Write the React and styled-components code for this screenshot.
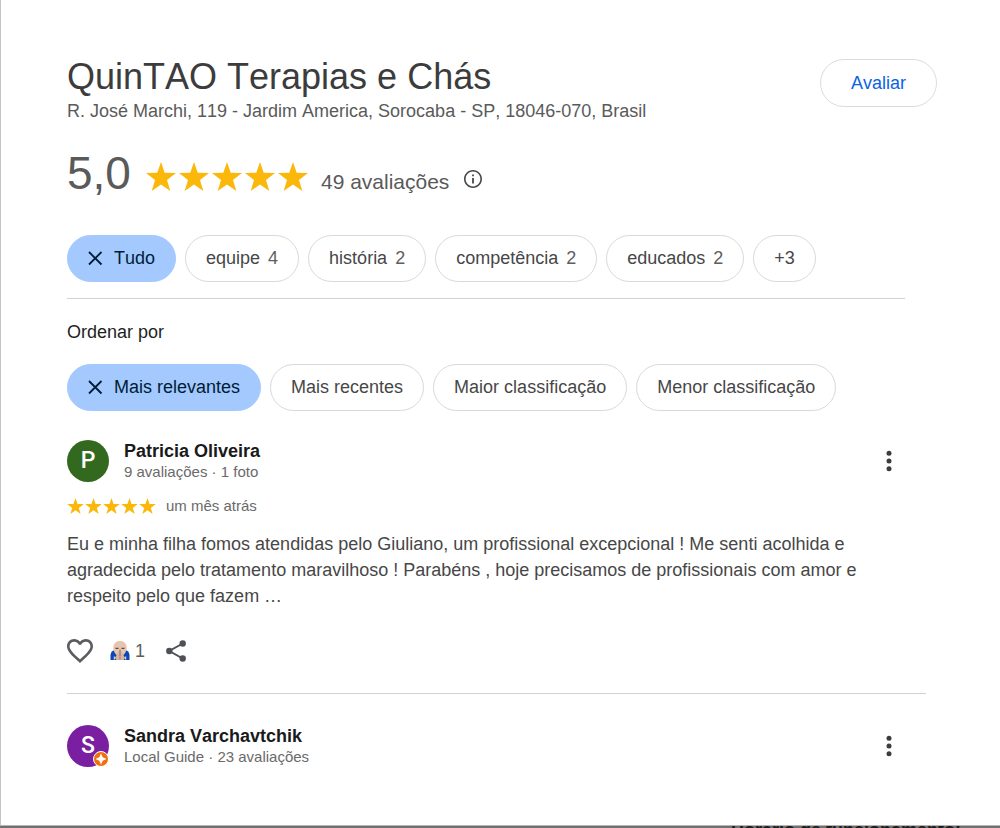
import React from "react";
import styled, { createGlobalStyle } from "styled-components";

const GlobalStyle = createGlobalStyle`
  * { box-sizing: border-box; }
  body {
    margin: 0;
    background: #fff;
    font-family: "Liberation Sans", Arial, sans-serif;
    font-size: 18px;
    font-kerning: none;
    line-height: 24px;
    color: #474747;
  }
  h1, h2, h3, p { margin: 0; font-weight: 400; }
  button { font: inherit; font-kerning: none; color: inherit; cursor: pointer; }
  svg { display: block; flex: none; }
`;

const Panel = styled.main`
  padding: 55px 63px 58px 66px;
  border-left: 1px solid #c4c4c4;
  border-bottom: 1px solid #b4b4b4;
  background: #fff;
`;

const Header = styled.header`
  display: flex;
  justify-content: space-between;
  align-items: flex-start;
`;

const Title = styled.h1`
  font-size: 36px;
  line-height: 44px;
  color: #3c3c3c;
`;

const Address = styled.p`
  color: #5a5a5a;
`;

const RateButton = styled.button`
  height: 48px;
  margin-top: 4px;
  padding: 0 30px;
  border: 1px solid #dadce0;
  border-radius: 24px;
  background: #fff;
  color: #0b62e6;
`;

const Summary = styled.div`
  display: flex;
  align-items: flex-end;
  margin-top: 29px;
  color: #5a5a5a;
`;

const Score = styled.span`
  font-size: 46px;
  line-height: 42px;
`;

const Stars = styled.span`
  display: flex;
  gap: ${(p) => (p.$large ? 3 : 1)}px;
  color: #fbb80a;
`;

const SummaryStars = styled.div`
  padding: 0 13px 3px 15px;
`;

const Count = styled.span`
  font-size: 21px;
`;

const IconButton = styled.button`
  display: flex;
  align-items: center;
  padding: 0;
  border: 0;
  background: none;
  color: #474747;
`;

const InfoButton = styled(IconButton)`
  margin: 0 0 6px 15px;
`;

const Filters = styled.section`
  margin: 41px 32px 0 0;
  padding-bottom: 16px;
  border-bottom: 1px solid #d2d2d2;
`;

const Chips = styled.div`
  display: flex;
  flex-wrap: wrap;
  gap: 9px;
`;

const Chip = styled.button`
  display: flex;
  align-items: center;
  height: 47px;
  padding: 0 20px 2px;
  border: 1px solid ${(p) => (p.$selected ? "#a3c9ff" : "#d8d9dc")};
  border-radius: 24px;
  background: ${(p) => (p.$selected ? "#a3c9ff" : "#fff")};
  color: ${(p) => (p.$selected ? "#001d35" : "#474747")};

  svg { margin-right: 10px; }
`;

const ChipCount = styled.span`
  margin-left: 8px;
  color: #5e5e5e;
`;

const Sort = styled.section`
  margin-top: 21px;
`;

const SortTitle = styled.h2`
  margin-bottom: 20px;
  font-size: 18px;
  color: #1f1f1f;
`;

const Review = styled.article`
  margin-right: 11px;
  padding: ${(p) => (p.$first ? 29 : 31)}px 0 0;
  border-bottom: ${(p) => (p.$last ? "0" : "1px solid #d2d2d2")};
`;

const Author = styled.div`
  display: flex;
  align-items: center;
`;

const Avatar = styled.div`
  position: relative;
  display: grid;
  place-items: center;
  width: 42px;
  height: 42px;
  margin-right: 15px;
  border-radius: 50%;
  background: ${(p) => p.$color};
  color: #fff;
  font: 500 23px/42px Roboto, sans-serif;
`;

const GuideBadge = styled.svg`
  position: absolute;
  right: 0;
  bottom: 0;
`;

const AuthorText = styled.div`
  flex: 1;
`;

const Name = styled.h3`
  font-size: 18px;
  line-height: 22px;
  font-weight: 700;
  color: #1a1a1a;
`;

const Meta = styled.p`
  font-size: 15px;
  line-height: 20px;
  color: #6a6a6a;
`;

const MenuButton = styled(IconButton)`
  margin-right: 25px;
`;

const Posted = styled.div`
  display: flex;
  align-items: center;
  gap: 10px;
  margin-top: 14px;
`;

const Body = styled.p`
  margin: 15px 32px 0 0;
  line-height: 26px;
`;

const Actions = styled.div`
  display: flex;
  align-items: center;
  height: 28px;
  margin: 28px 0;
`;

const Reaction = styled(IconButton)`
  gap: 5px;
  margin: 0 21px 0 17px;
  color: #5e5e5e;
`;

const Backdrop = styled.aside`
  height: 2px;
  padding-right: 39px;
  overflow: hidden;
  background: #707070;
  color: #1c1c1c;
  font-weight: 700;
  line-height: 8px;
  text-align: right;
`;

const StarRow = ({ large }) => (
  <Stars $large={large} role="img" aria-label="5 estrelas">
    {[1, 2, 3, 4, 5].map((n) => (
      <svg key={n} width={large ? 30 : 17} height={large ? 29 : 16} viewBox="0 0 30 29" fill="currentColor">
        <path d="M15 0l3.700 10.700L30 11l-9 6.900L24.300 29 15 22.400 5.700 29 9 17.900 0 11l11.300-.3z" />
      </svg>
    ))}
  </Stars>
);

const CloseIcon = () => (
  <svg width="16" height="16" viewBox="0 0 16 16" fill="none" stroke="currentColor" strokeWidth="1.800">
    <path d="M1 2l12.500 12.500M13.500 2L1 14.500" />
  </svg>
);

const InfoIcon = () => (
  <svg width="18" height="18" viewBox="2 2 20 20" fill="currentColor">
    <path d="M11 7h2v2h-2zm0 4h2v6h-2zm1-9C6.48 2 2 6.48 2 12s4.48 10 10 10 10-4.48 10-10S17.52 2 12 2zm0 18.2c-4.52 0-8.2-3.68-8.2-8.2S7.48 3.8 12 3.8s8.2 3.68 8.2 8.2-3.68 8.2-8.2 8.2z" />
  </svg>
);

const DotsIcon = () => (
  <svg width="24" height="24" viewBox="0 0 24 24" fill="#3c3c3c">
    <circle cx="12" cy="4.200" r="2.500" />
    <circle cx="12" cy="12" r="2.500" />
    <circle cx="12" cy="19.800" r="2.500" />
  </svg>
);

const HeartIcon = () => (
  <svg width="26" height="24" viewBox="2 3 20 18.35" fill="#5a5c5f">
    <path d="M16.5 3c-1.74 0-3.41.81-4.5 2.09C10.91 3.81 9.24 3 7.5 3 4.42 3 2 5.42 2 8.5c0 3.78 3.4 6.86 8.55 11.54L12 21.35l1.45-1.32C18.6 15.36 22 12.28 22 8.5 22 5.42 19.58 3 16.5 3zm-4.4 15.55-.1.1-.1-.1C7.14 14.24 4 11.39 4 8.5 4 6.5 5.5 5 7.5 5c1.54 0 3.04.99 3.57 2.36h1.87C13.46 5.99 14.96 5 16.5 5c2 0 3.5 1.5 3.5 3.5 0 2.89-3.14 5.74-7.9 10.05z" />
  </svg>
);

const PrayIcon = () => (
  <svg width="20" height="20" viewBox="0 0 20 20">
    <path d="M.5 19v-5q.5-4.500 4.500-5h10q4 .5 4.500 5v5z" fill="#0d47b5" />
    <path d="M3.300 7C3.300 2.500 6.300 0 10 0s6.700 2.500 6.700 7c0 3-1.700 5.500-3.200 7l-3.500 2-3.500-2C5 12.500 3.300 10 3.300 7z" fill="#e6c4ae" />
    <path d="M5.500 7.300h3M11.500 7.300h3" stroke="#5c4940" strokeWidth="1.300" />
    <path d="M9.800 9 7 13.500 4.800 17l1.700 2h3.300zM10.200 9l2.800 4.500 2.200 3.500-1.700 2h-3.300z" fill="#dbb49b" />
    <path d="M10 8.500v7" stroke="#8b8183" strokeWidth="1.200" />
    <path d="M4.300 15.500v3M15.700 15.500v3" stroke="#eef1f7" strokeWidth="1" />
  </svg>
);

const ShareIcon = () => (
  <svg width="20" height="22" viewBox="0 0 20 22" fill="#4d5156">
    <path d="M16.700 3.500 3.300 11l13.400 7.500" fill="none" stroke="#4d5156" strokeWidth="2" />
    <circle cx="16.700" cy="3.500" r="3.200" />
    <circle cx="3.300" cy="11" r="3.200" />
    <circle cx="16.700" cy="18.500" r="3.200" />
  </svg>
);

const topics = [
  ["equipe", 4],
  ["história", 2],
  ["competência", 2],
  ["educados", 2],
];

const sortOptions = ["Mais recentes", "Maior classificação", "Menor classificação"];

export default function App() {
  return (
    <>
      <GlobalStyle />
      <Panel>
        <Header>
          <div>
            <Title>QuinTAO Terapias e Chás</Title>
            <Address>R. José Marchi, 119 - Jardim America, Sorocaba - SP, 18046-070, Brasil</Address>
          </div>
          <RateButton>Avaliar</RateButton>
        </Header>

        <Summary>
          <Score>5,0</Score>
          <SummaryStars><StarRow large /></SummaryStars>
          <Count>49 avaliações</Count>
          <InfoButton aria-label="Informações"><InfoIcon /></InfoButton>
        </Summary>

        <Filters>
          <Chips>
            <Chip $selected aria-pressed="true"><CloseIcon />Tudo</Chip>
            {topics.map(([label, count]) => (
              <Chip key={label}>{label}<ChipCount>{count}</ChipCount></Chip>
            ))}
            <Chip>+3</Chip>
          </Chips>
        </Filters>

        <Sort>
          <SortTitle>Ordenar por</SortTitle>
          <Chips>
            <Chip $selected aria-pressed="true"><CloseIcon />Mais relevantes</Chip>
            {sortOptions.map((label) => <Chip key={label}>{label}</Chip>)}
          </Chips>
        </Sort>

        <Review $first>
          <Author>
            <Avatar $color="#33691e">P</Avatar>
            <AuthorText>
              <Name>Patricia Oliveira</Name>
              <Meta>9 avaliações · 1 foto</Meta>
            </AuthorText>
            <MenuButton aria-label="Mais opções"><DotsIcon /></MenuButton>
          </Author>
          <Posted>
            <StarRow />
            <Meta as="time">um mês atrás</Meta>
          </Posted>
          <Body>
            Eu e minha filha fomos atendidas pelo Giuliano, um profissional excepcional ! Me senti
            acolhida e agradecida pelo tratamento maravilhoso ! Parabéns , hoje precisamos de
            profissionais com amor e respeito pelo que fazem …
          </Body>
          <Actions>
            <IconButton aria-label="Curtir"><HeartIcon /></IconButton>
            <Reaction><PrayIcon />1</Reaction>
            <IconButton aria-label="Compartilhar"><ShareIcon /></IconButton>
          </Actions>
        </Review>

        <Review $last>
          <Author>
            <Avatar $color="#7b1fa2">
              S
              <GuideBadge width="16" height="16" viewBox="0 0 16 16" aria-hidden="true">
                <circle cx="8" cy="8" r="7.500" fill="#f0700f" stroke="#fff" strokeWidth="1" />
                <path d="M8 2.500 9.700 6.300 13.500 8 9.700 9.700 8 13.500 6.300 9.700 2.500 8l3.800-1.700z" fill="#fff" />
              </GuideBadge>
            </Avatar>
            <AuthorText>
              <Name>Sandra Varchavtchik</Name>
              <Meta>Local Guide · 23 avaliações</Meta>
            </AuthorText>
            <MenuButton aria-label="Mais opções"><DotsIcon /></MenuButton>
          </Author>
        </Review>
      </Panel>
      <Backdrop>Horário de funcionamento:</Backdrop>
    </>
  );
}
